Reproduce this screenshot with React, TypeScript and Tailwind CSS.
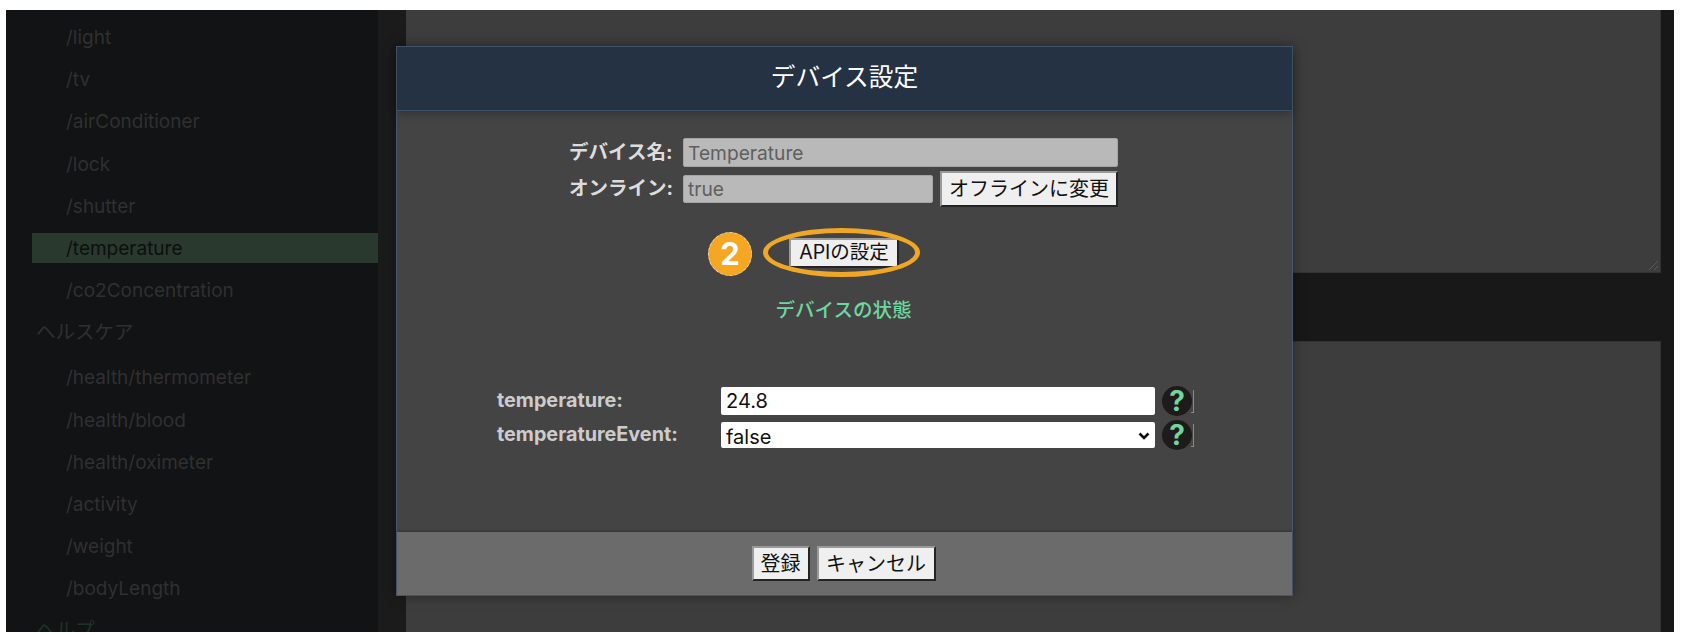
const sans = "font-['Inter','Noto_Sans_CJK_JP',sans-serif]";

type Row = { t: string; heading?: boolean; active?: boolean; help?: boolean };
const rows: Row[] = [
  { t: "/light" }, { t: "/tv" }, { t: "/airConditioner" }, { t: "/lock" }, { t: "/shutter" },
  { t: "/temperature", active: true }, { t: "/co2Concentration" },
  { t: "ヘルスケア", heading: true },
  { t: "/health/thermometer" }, { t: "/health/blood" }, { t: "/health/oximeter" },
  { t: "/activity" }, { t: "/weight" }, { t: "/bodyLength" },
  { t: "ヘルプ", heading: true, help: true },
];

function Btn({ children, className = "" }: { children: React.ReactNode; className?: string }) {
  return (
    <button className={`bg-[#efefef] text-[#111] leading-none border-2 border-t-[#9a9a9a] border-l-[#9a9a9a] border-r-[#242424] border-b-[#242424] whitespace-nowrap ${className}`}>
      {children}
    </button>
  );
}

function Help() {
  return (
    <span className="flex items-center ml-[7px] h-full">
      <span className="w-[30px] h-[30px] shrink-0 rounded-full bg-[#201b1b] text-[#6fd6a0] font-bold text-[28px] leading-[30px] text-center">?</span>
      <span className="w-[3px] h-[23px] ml-[-1px] border-r border-b border-[#8a8a8a]" />
    </span>
  );
}

export default function App() {
  return (
    <div className={`${sans} relative w-[1682px] h-[636px] bg-white pt-[10px] pl-[6px] pr-[8px] pb-[4px] overflow-hidden`}>
      <div className="flex h-full bg-[#181818]">
        <aside className="w-[372px] h-full bg-[#121314] pt-[12px] overflow-hidden shrink-0">
          <ul>
            {rows.map((r) => (
              <li
                key={r.t}
                className={`h-[30px] whitespace-nowrap ${
                  r.heading
                    ? `leading-[31px] text-[19.5px] pl-[30px] mb-[15px] ${r.help ? "mt-[4px] text-[#1c3326]" : "text-[#303030]"}`
                    : r.active
                    ? "leading-[32px] text-[19px] mb-[12.2px] ml-[26px] pl-[34px] bg-[#29392e] text-[#0e0f0f]"
                    : "leading-[32px] text-[19px] mb-[12.2px] pl-[60px] text-[#303030]"
                }`}
              >
                {r.t}
              </li>
            ))}
          </ul>
        </aside>
        <div className="w-[28px] bg-[#1b1b1b] shrink-0" />
        <main className="w-[1255px] flex flex-col shrink-0">
          <div className="relative h-[263px] bg-[#3d3d3d] border-r border-b border-[#333]">
            <svg className="absolute right-[1px] bottom-[1px]" width="11" height="11" viewBox="0 0 11 11">
              <path d="M1 10 10 1M6 10l4-4" stroke="#5a5a5a" strokeWidth="1" fill="none" />
            </svg>
          </div>
          <div className="h-[68px]" />
          <div className="flex-1 bg-[#3d3d3d] border-r border-t border-[#333]" />
        </main>
      </div>

      <div className="absolute left-[396px] top-[46px] w-[897px] h-[550px] flex flex-col bg-[#444444] border border-[#46586a] shadow-[0_0_12px_rgba(0,0,0,0.35)]">
        <header className="h-[64px] shrink-0 bg-[#253243] border-b border-[#3b4f66] shadow-[0_3px_8px_rgba(0,0,0,0.25)] flex items-center justify-center text-white text-[24.7px] pb-[1px]">
          デバイス設定
        </header>
        <div className="flex-1 pt-[27px]">
          <div className="ml-[172px] w-[549px]">
            <div className="flex h-[29px] items-center">
              <label className="w-[114px] font-bold text-[19.5px] text-[#dddddd] whitespace-nowrap">デバイス名:</label>
              <input readOnly value="Temperature" className="w-[435px] h-[29px] bg-[#b9b9b9] text-[#5f5f5f] text-[19.2px] px-[4px] rounded-[2px] border border-[#a5a5a5]" />
            </div>
            <div className="flex h-[36px] mt-[4px] items-center">
              <label className="w-[114px] font-bold text-[19.5px] text-[#dddddd] whitespace-nowrap">オンライン:</label>
              <input readOnly value="true" className="w-[250px] h-[28px] bg-[#b9b9b9] text-[#5f5f5f] text-[19.2px] px-[4px] rounded-[2px] border border-[#a5a5a5]" />
              <Btn className="ml-[7px] w-[178px] h-[36px] text-[20px]">オフラインに変更</Btn>
            </div>
          </div>

          <div className="relative mt-[31px] h-[30px] flex justify-center">
            <span className="absolute left-[311px] top-[-6px] w-[44px] h-[44px] rounded-full bg-[#f5a623] border border-dashed border-[#e8dcc4] text-white font-bold text-[31px] leading-[42px] text-center">2</span>
            <Btn className="absolute left-[392px] top-0 w-[110px] h-[30px] text-[19.5px]">APIの設定</Btn>
            <span className="absolute left-[366px] top-[-10px] w-[157px] h-[49px] rounded-[50%] border-[5.5px] border-[#f0a726]" />
          </div>

          <div className="mt-[27px] h-[30px] leading-[30px] text-center text-[#6fd6a0] text-[19.5px] font-medium pr-[2px]">デバイスの状態</div>

          <div className="ml-[100px] mt-[62px] flex h-[28px] items-center">
            <label className="w-[224px] font-bold text-[19.8px] text-[#cccccc]">temperature:</label>
            <input readOnly value="24.8" className="w-[434px] h-[28px] bg-white text-[#111] text-[20px] px-[5px] rounded-[2px]" />
            <Help />
          </div>
          <div className="ml-[100px] mt-[7px] flex h-[26px] items-center">
            <label className="w-[224px] font-bold text-[19.8px] text-[#cccccc]">temperatureEvent:</label>
            <span className="relative w-[434px] h-[26px]">
              <select defaultValue="false" className="w-full h-full bg-white text-[#111] text-[20px] pl-[5px] rounded-[2px] appearance-none">
                <option value="false">false</option>
                <option value="true">true</option>
              </select>
              <svg className="absolute right-[5px] top-[10px] pointer-events-none" width="12" height="8" viewBox="0 0 12 8">
                <path d="M1.5 1.5 6 6l4.5-4.5" stroke="#111" strokeWidth="2.6" fill="none" />
              </svg>
            </span>
            <Help />
          </div>
        </div>
        <footer className="h-[63px] shrink-0 bg-[#6b6b6b] flex items-center justify-center gap-[7px] shadow-[0_-1px_2px_rgba(0,0,0,0.25)] pr-[2px]">
          <Btn className="w-[58px] h-[35px] text-[20px]">登録</Btn>
          <Btn className="w-[119px] h-[35px] text-[20px]">キャンセル</Btn>
        </footer>
      </div>
    </div>
  );
}
